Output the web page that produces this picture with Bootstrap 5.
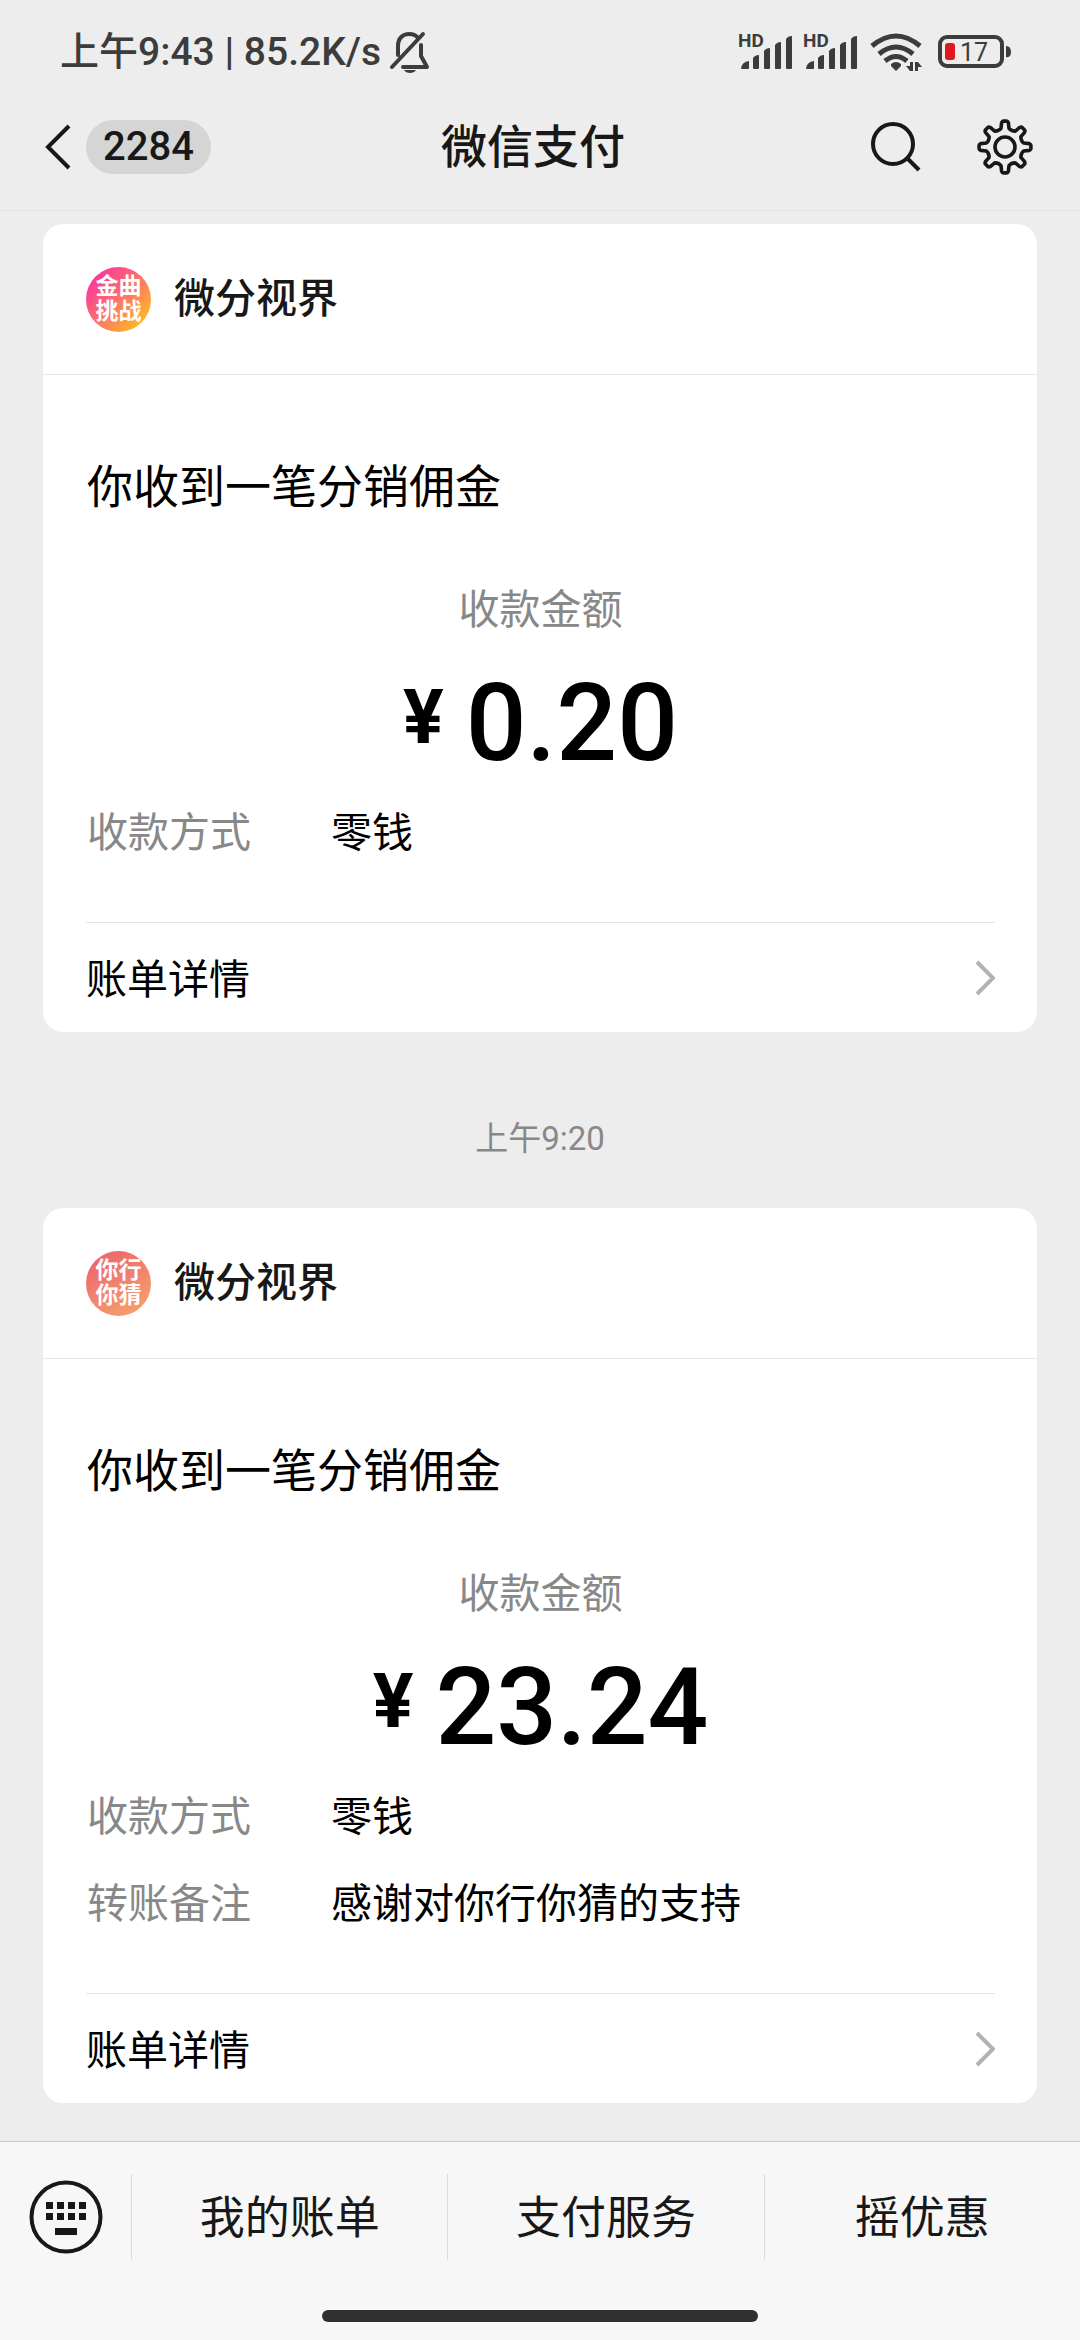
<!DOCTYPE html>
<html lang="zh-CN">
<head>
<meta charset="utf-8">
<meta name="viewport" content="width=device-width, initial-scale=1">
<title>微信支付</title>
<link href="https://cdn.jsdelivr.net/npm/bootstrap@5.3.0/dist/css/bootstrap.min.css" rel="stylesheet">
<style>
  body { background: #ededed; color: #000; font-family: Roboto, "Noto Sans CJK SC", sans-serif; font-size: 41px; line-height: 60px; }
  svg { display: block; flex: none; }
  a, a:hover { color: inherit; text-decoration: none; }
  .status-bar { padding: 30px 66px 0 60px; line-height: 44px; font-size: 39px; font-weight: 500; color: #3c3c3c; }
  .title-bar { display: grid; grid-template-columns: 1fr auto 1fr; padding: 43px 46px 33px 44px; color: #181818; border-bottom: 1px solid #e2e2e2; }
  .title-bar h1 { font-size: 46px; line-height: 60px; font-weight: 500; padding-right: 12px; }
  .title-actions { gap: 52px; }
  .plain-btn { border: 0; background: none; padding: 0; color: inherit; }
  .count-pill { background: #d5d5d5; font-size: 40px; font-weight: 500; line-height: 54px; padding: 0 17px; }
  .feed { padding: 13px 43px 38px; }
  .pay-card { border: 0; border-radius: 20px; color: #000; }
  .pay-head { height: 151px; padding: 0 43px; border-bottom: 1px solid #e6e6e6; color: #181818; font-weight: 500; gap: 23px; }
  .brand { width: 65px; height: 65px; color: #fff; font-size: 23px; line-height: 25px; font-weight: 700; }
  .brand-song { background: linear-gradient(135deg, #f93b9a 15%, #fd6f6c 48%, #fdb52c 85%); }
  .brand-guess { background: linear-gradient(150deg, #ec6a6c 15%, #f6a06c 90%); }
  .pay-body { padding: 82px 43px 59px 44px; }
  .pay-body h2 { font-size: 46px; line-height: 60px; font-weight: 400; margin: 0 0 63px; }
  .soft { color: #888; }
  .amount { font-size: 107px; line-height: 110px; font-weight: 500; margin: 29px 0 24px; gap: 22px; }
  .amount small { font-size: 76px; line-height: 96px; font-weight: 700; }
  .facts { display: grid; grid-template-columns: 244px 1fr; row-gap: 27px; margin: 0; }
  .facts dt { font-weight: 400; }
  .facts dd { margin: 0; }
  .pay-more { margin: 0 42px 0 43px; height: 110px; border-top: 1px solid #e2e2e2; }
  .stamp { font-size: 33px; margin: 77px 0 39px; }
  .menu-bar { background: #f7f7f7; border-top: 1px solid #c9c9c9; color: #181818; font-size: 45px; }
  .menu-row { padding: 32px 0; }
  .key-cell { width: 131px; }
  .menu-row .menu-item { border-left: 1px solid #dcdcdc; height: 86px; }
  .home-line { width: 40.3%; height: 12px; background: #303030; margin: 18px auto; }
</style>
</head>
<body class="d-flex flex-column min-vh-100">
<header>
  <div class="status-bar d-flex justify-content-between align-items-center">
    <div class="d-flex align-items-center gap-2">
      <span>上午9:43 | 85.2K/s</span>
      <svg width="42" height="44" viewBox="0 0 42 44" fill="none" stroke="#3c3c3c" stroke-width="4" stroke-linecap="round" stroke-linejoin="round">
        <path d="M9 25V16C9 8 14 4 20 4c4 0 7 1 9 4M32 15v11l6 11H14M3 37 34 4"/>
        <path d="M15 40h12c-2 4-10 4-12 0z" fill="#3c3c3c" stroke="none"/>
      </svg>
    </div>
    <svg width="276" height="44" viewBox="0 0 276 44" fill="#3c3c3c">
      <g id="sim">
        <text x="0" y="17" font-size="19" font-weight="700">HD</text>
        <path d="M3 38q1-6 8-7v7q0 1-1 1H4q-1 0-1-1zM15 28q2-3 6-3v13q0 1-1 1h-4q-1 0-1-1zM26 21q2-3 6-3v20q0 1-1 1h-4q-1 0-1-1zM37 15q2-3 6-3v26q0 1-1 1h-4q-1 0-1-1zM48 9q2-3 6-3v32q0 1-1 1h-4q-1 0-1-1z"/>
      </g>
      <use href="#sim" x="65"/>
      <g fill="none" stroke="#3c3c3c" stroke-width="5">
        <path d="M134 16q24-20 48 0M141 24q17-14 34 0M147 31q11-9 22 0"/>
      </g>
      <path d="M153 34q5-4 10 0v2l-5 5-5-5zM172 32h3v9h-3l-4-5h4zM177 32h3l4 5h-4v4h-3z"/>
      <rect x="202" y="7" width="62" height="29" rx="7" fill="none" stroke="#3c3c3c" stroke-width="4"/>
      <rect x="207" y="13" width="10" height="17" rx="3" fill="#e0171c"/>
      <path d="M268 16q5 0 5 6t-5 5z"/>
      <text x="222" y="31" font-size="25" font-weight="400">17</text>
    </svg>
  </div>
  <nav class="title-bar align-items-center">
    <div class="d-flex align-items-center">
      <button class="plain-btn d-flex align-items-center" type="button" aria-label="返回">
        <svg width="42" height="54" viewBox="0 0 42 54" fill="none" stroke="#181818" stroke-width="4"><path d="M25 6 4 27l21 21"/></svg>
        <span class="count-pill rounded-pill">2284</span>
      </button>
    </div>
    <h1 class="m-0">微信支付</h1>
    <div class="title-actions d-flex align-items-center justify-content-end">
      <button class="plain-btn" type="button" aria-label="搜索">
        <svg width="56" height="58" viewBox="0 0 56 58" fill="none" stroke="#181818" stroke-width="4"><circle cx="25" cy="26" r="20"/><path d="m39 40 12 12"/></svg>
      </button>
      <button class="plain-btn" type="button" aria-label="设置">
        <svg id="gear" width="58" height="58" viewBox="-29 -29 58 58" fill="none" stroke="#181818" stroke-width="3.600" stroke-linejoin="round"><path/><circle r="10"/></svg>
      </button>
    </div>
  </nav>
</header>

<main class="feed">
  <article class="card pay-card">
    <div class="pay-head d-flex align-items-center">
      <div class="brand brand-song rounded-circle d-flex flex-column align-items-center justify-content-center"><span>金曲</span><span>挑战</span></div>
      <span>微分视界</span>
    </div>
    <div class="pay-body">
      <h2>你收到一笔分销佣金</h2>
      <div class="soft text-center">收款金额</div>
      <div class="amount d-flex justify-content-center"><small>¥</small><span>0.20</span></div>
      <dl class="facts"><dt class="soft">收款方式</dt><dd>零钱</dd></dl>
    </div>
    <a href="#" class="pay-more d-flex align-items-center justify-content-between"><span class="pt-1">账单详情</span>
      <svg width="24" height="40" viewBox="0 0 24 40" fill="none" stroke="#b2b2b2" stroke-width="4"><path d="m6 4 16 16L6 36"/></svg>
    </a>
  </article>

  <div class="stamp soft text-center">上午9:20</div>

  <article class="card pay-card">
    <div class="pay-head d-flex align-items-center">
      <div class="brand brand-guess rounded-circle d-flex flex-column align-items-center justify-content-center"><span>你行</span><span>你猜</span></div>
      <span>微分视界</span>
    </div>
    <div class="pay-body">
      <h2>你收到一笔分销佣金</h2>
      <div class="soft text-center">收款金额</div>
      <div class="amount d-flex justify-content-center"><small>¥</small><span>23.24</span></div>
      <dl class="facts"><dt class="soft">收款方式</dt><dd>零钱</dd><dt class="soft">转账备注</dt><dd>感谢对你行你猜的支持</dd></dl>
    </div>
    <a href="#" class="pay-more d-flex align-items-center justify-content-between"><span class="pt-1">账单详情</span>
      <svg width="24" height="40" viewBox="0 0 24 40" fill="none" stroke="#b2b2b2" stroke-width="4"><path d="m6 4 16 16L6 36"/></svg>
    </a>
  </article>
</main>

<footer class="menu-bar mt-auto">
  <div class="menu-row d-flex align-items-center">
    <button class="plain-btn key-cell d-flex justify-content-center" type="button" aria-label="键盘">
      <svg width="76" height="76" viewBox="0 0 76 76" fill="#181818">
        <circle cx="38" cy="38" r="34.500" fill="none" stroke="#181818" stroke-width="4"/>
        <path d="M18 23h7v7h-7zM29 23h7v7h-7zM40 23h7v7h-7zM51 23h7v7h-7zM18 34h7v7h-7zM29 34h7v7h-7zM40 34h7v7h-7zM51 34h7v7h-7zM27 49h22v7H27z"/>
      </svg>
    </button>
    <div class="row g-0 flex-fill text-center">
      <a href="#" class="col menu-item d-flex align-items-center justify-content-center pt-1">我的账单</a>
      <a href="#" class="col menu-item d-flex align-items-center justify-content-center pt-1">支付服务</a>
      <a href="#" class="col menu-item d-flex align-items-center justify-content-center pt-1">摇优惠</a>
    </div>
  </div>
  <div class="home-line rounded-pill"></div>
</footer>
<script src="https://cdn.jsdelivr.net/npm/bootstrap@5.3.0/dist/js/bootstrap.bundle.min.js"></script>
<script>
  // Gear outline: eight teeth, each with a flat tip and a rounded valley.
  let d = '';
  for (let i = 0; i < 8; i++) {
    const at = (r, deg) => { const t = (i * 45 - 90 + deg) * Math.PI / 180; return (r * Math.cos(t)).toFixed(1) + ' ' + (r * Math.sin(t)).toFixed(1); };
    d += (i ? 'L' : 'M') + at(19, -12) + 'L' + at(24.5, -8) + 'Q' + at(26, -6) + ' ' + at(26, -4) + 'L' + at(26, 4) + 'Q' + at(26, 6) + ' ' + at(24.5, 8) + 'L' + at(19, 12) + 'Q' + at(17, 22.5) + ' ' + at(19, 33);
  }
  document.querySelector('#gear path').setAttribute('d', d + 'Z');
</script>
</body>
</html>
